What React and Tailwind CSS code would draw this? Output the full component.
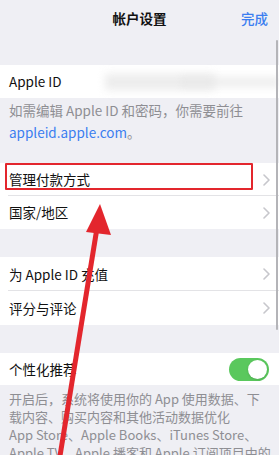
import React from 'react'

const font = { fontFamily: '"Noto Sans CJK SC", "Noto Sans", sans-serif' }

const Chevron = () => (
  <svg width="7" height="12" viewBox="0 0 7 12" className="shrink-0">
    <path d="M1 1l5 5-5 5" fill="none" stroke="#c7c7cc" strokeWidth="1.6" strokeLinecap="round" strokeLinejoin="round" />
  </svg>
)

function Row({ label, chevron = true, divider = false, right = null, h = 'h-[33px]' }) {
  return (
    <div className={`relative flex items-center pl-[9px] pr-[9px] ${h}`}>
      <span className="flex-1 text-[13.5px] text-[#111]">{label}</span>
      {right}
      {chevron && <Chevron />}
      {divider && <div className="absolute bottom-0 left-[8px] right-0 h-px bg-[#e3e3e6]" />}
    </div>
  )
}

function Toggle() {
  return (
    <div className="w-[40px] h-[23px] rounded-full bg-[#5ac85d] flex items-center justify-end p-[2px] mr-[1px]">
      <div className="w-[19px] h-[19px] rounded-full bg-white shadow" />
    </div>
  )
}

export default function App() {
  return (
    <div className="relative w-[279px] h-[455px] overflow-hidden bg-[#efeff4]" style={font}>

      <div className="h-[36px] relative flex items-center justify-center">
        <span className="text-[13.5px] font-semibold text-[#111]">帐户设置</span>
        <span className="absolute right-[11px] text-[13.5px] font-medium text-[#3b7ef0]">完成</span>
      </div>

      <div className="mt-[29px] bg-white relative">
        <Row label="Apple ID" chevron={false} />
        <div className="absolute top-[9px] left-[105px] w-[110px] h-[16px] bg-[#e0e0e0] blur-[4px] opacity-60" />
        <div className="absolute top-[11px] left-[180px] w-[99px] h-[12px] bg-[#e8e8e8] blur-[3px] opacity-60" />
      </div>

      <div className="px-[9px] pt-[1px] text-[13.5px] leading-[22px] text-[#8e8e93]">
        <div>如需编辑 Apple ID 和密码，你需要前往</div>
        <div><span className="text-[#3b7ef0]">appleid.apple.com</span>。</div>
      </div>

      <div className="mt-[20px] bg-white">
        <Row label="管理付款方式" divider />
        <Row label="国家/地区" />
      </div>

      <div className="mt-[28px] bg-white">
        <Row label="为 Apple ID 充值" divider h="h-[34px]" />
        <Row label="评分与评论" h="h-[34px]" />
      </div>

      <div className="mt-[28px] bg-white">
        <Row label="个性化推荐" chevron={false} h="h-[32px]" right={<Toggle />} />
      </div>

      <div className="px-[9px] pt-[5px] text-[13px] leading-[18px] text-[#8e8e93]">
        <div>开启后，系统将使用你的 App 使用数据、下</div>
        <div>载内容、购买内容和其他活动数据优化</div>
        <div>App Store、Apple Books、iTunes Store、</div>
        <div className="whitespace-nowrap">Apple TV、Apple 播客和 Apple 订阅项目中的</div>
      </div>

      {/* scrollbar */}
      <div className="absolute right-[1px] top-[40px] w-[2px] h-[290px] rounded-full bg-[#b4b4b8]" />

      {/* red highlight */}
      <div className="absolute left-[5px] top-[163px] w-[248px] h-[27px] border-2 border-[#e3262d] rounded-[1px]" />

      {/* red arrow */}
      <svg className="absolute inset-0 pointer-events-none" width="279" height="455">
        <line x1="97" y1="228" x2="59" y2="462" stroke="#e3262d" strokeWidth="5" />
        <polygon points="100,204 86,232 111,235" fill="#e3262d" />
      </svg>
    </div>
  )
}
